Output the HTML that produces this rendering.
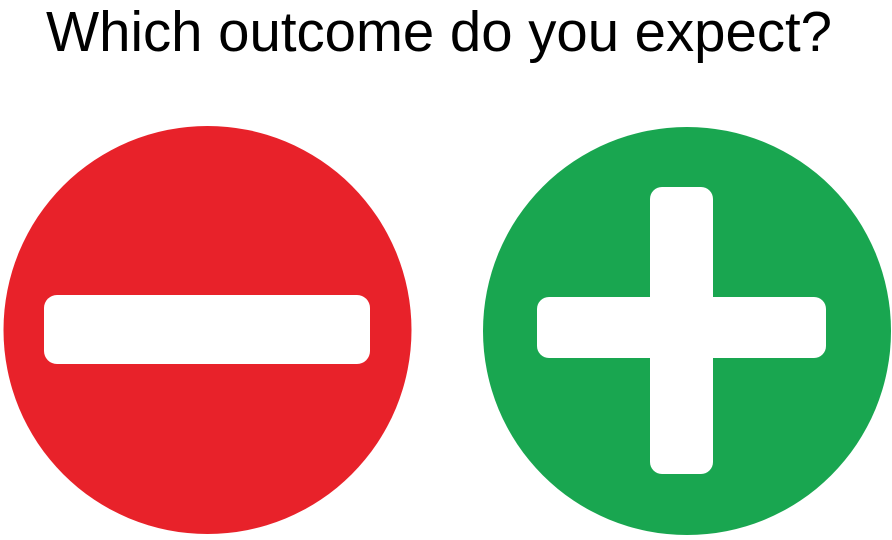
<!DOCTYPE html>
<html><head><meta charset="utf-8"><style>
html,body{margin:0;padding:0;background:#fff;width:892px;height:540px;overflow:hidden}
</style></head><body>
<svg width="892" height="540" viewBox="0 0 892 540" xmlns="http://www.w3.org/2000/svg">
<text x="46" y="51" font-family="Liberation Sans, sans-serif" font-size="57" fill="#000" textLength="786" lengthAdjust="spacingAndGlyphs">Which outcome do you expect?</text>
<circle cx="207.5" cy="330" r="204" fill="#e8222a"/>
<rect x="44" y="295" width="326" height="69" rx="13" fill="#fff"/>
<circle cx="687" cy="331" r="204" fill="#19a650"/>
<rect x="537" y="297" width="289" height="61" rx="12" fill="#fff"/>
<rect x="650" y="187" width="63" height="287" rx="12" fill="#fff"/>
</svg>
</body></html>
